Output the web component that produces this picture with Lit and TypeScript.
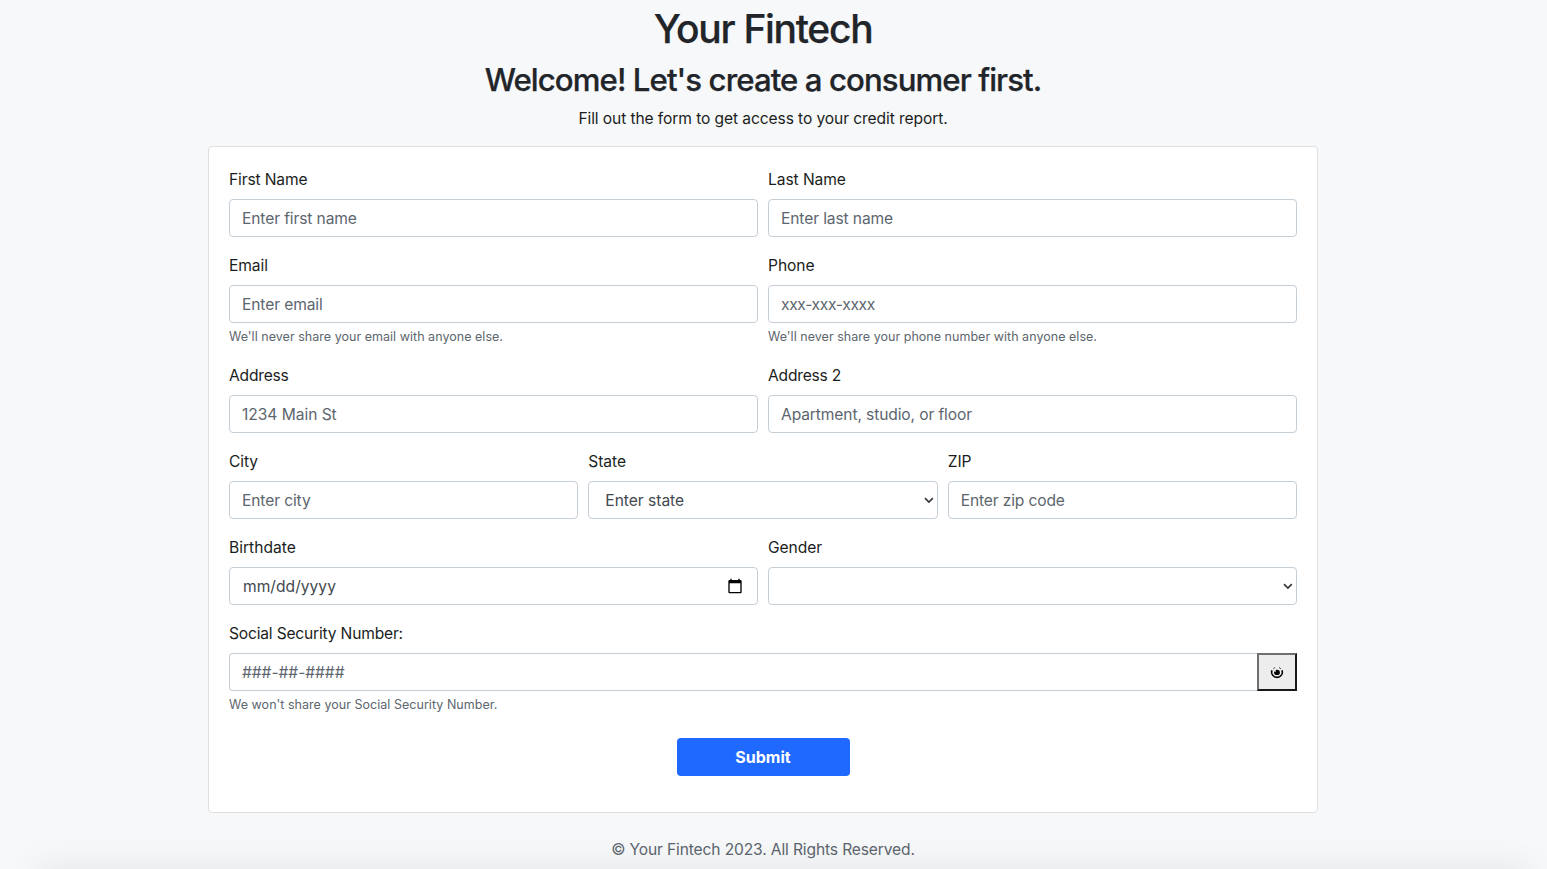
import { LitElement, html, css, svg, nothing } from "lit";

interface Field {
  id: string;
  label: string;
  kind?: "text" | "select" | "date";
  hint?: string;
  help?: string;
  labelTrack?: number;
  hintTrack?: number;
}

const ROWS: Field[][] = [
  [
    { id: "first", label: "First Name", hint: "Enter first name", labelTrack: -0.15 },
    { id: "last", label: "Last Name", hint: "Enter last name" },
  ],
  [
    { id: "email", label: "Email", hint: "Enter email", help: "We'll never share your email with anyone else." },
    { id: "phone", label: "Phone", hint: "xxx-xxx-xxxx", hintTrack: -0.35, help: "We'll never share your phone number with anyone else." },
  ],
  [
    { id: "address", label: "Address", hint: "1234 Main St", labelTrack: -0.2, hintTrack: -0.05 },
    { id: "address2", label: "Address 2", hint: "Apartment, studio, or floor", labelTrack: -0.2 },
  ],
  [
    { id: "city", label: "City", hint: "Enter city" },
    { id: "state", label: "State", kind: "select", hint: "Enter state", hintTrack: -0.03 },
    { id: "zip", label: "ZIP", hint: "Enter zip code", hintTrack: -0.14 },
  ],
  [
    { id: "birthdate", label: "Birthdate", kind: "date", hint: "mm/dd/yyyy", hintTrack: 0.02, labelTrack: 0 },
    { id: "gender", label: "Gender", kind: "select", hint: "" },
  ],
];

const chevron = svg`<path d="M1 1.2 4.9 5 8.8 1.2" fill="none" stroke="#343a40" stroke-width="1.7"/>`;
const calendar = svg`<path d="M20 3h-1V1h-2v2H7V1H5v2H4c-1.1 0-2 .9-2 2v16c0 1.1.9 2 2 2h16c1.1 0 2-.9 2-2V5c0-1.1-.9-2-2-2zm0 18H4V8h16v13z"/>`;

class AppRoot extends LitElement {
  static styles = css`
    :host {
      display: block;
      position: relative;
      box-sizing: border-box;
      height: 869px;
      overflow: hidden;
      padding: 5px 229px 0 208px;
      background: #f7f8fa;
      color: #212529;
      font: 400 15.6px/24px Inter, "Liberation Sans", sans-serif;
      letter-spacing: -0.08px;
    }
    *, *::before, *::after { box-sizing: border-box; }
    h1, h2, p { margin: 0; text-align: center; }
    h1 { font-size: 39px; line-height: 48px; font-weight: 500; letter-spacing: -1.3px; margin-bottom: 8px; }
    h2 { font-size: 31.2px; line-height: 38px; font-weight: 500; letter-spacing: -0.93px; margin-bottom: 8px; }
    h1, h2 { -webkit-text-stroke: 0.25px #212529; }
    .lead { margin-bottom: 15px; letter-spacing: -0.1px; }
    .card {
      height: 667px;
      padding: 20px;
      border: 1px solid #dddfe1;
      border-radius: 4px;
      background: #fff;
    }
    .row { display: flex; gap: 10px; margin-bottom: 16px; }
    .field { flex: 1 1 0; min-width: 0; }
    label { display: block; padding-top: 1px; margin-bottom: 7px; letter-spacing: var(--track, -0.08px); }
    .lead, label { color: #1b1e21; }
    .box { display: grid; }
    .box > * { grid-area: 1 / 1; }
    .control {
      display: block;
      width: 100%;
      height: 38px;
      margin: 0;
      padding: 6px 12px;
      border: 1px solid #c6ced6;
      border-radius: 4px;
      outline: 0;
      background: #fff;
      color: #43494f;
      font: inherit;
      letter-spacing: var(--track, -0.12px);
      appearance: none;
    }
    .control::placeholder { color: #5d666e; opacity: 1; }
    .date { padding-left: 13px; }
    .date::placeholder { color: #43494f; }
    select.control { padding: 7px 12px 5px 16px; }
    .chevron, .calendar { align-self: center; justify-self: end; pointer-events: none; }
    .chevron { margin-right: 4px; }
    .calendar { margin: 0 15px 1px 0; }
    .help { display: block; height: 20px; margin-top: 4px; font-size: 12.5px; line-height: 20px; letter-spacing: 0.03px; color: #5d666e; }
    .group { display: flex; }
    .group .control { flex: 1; border-radius: 4px 0 0 4px; border-right: 0; }
    .reveal {
      display: flex;
      align-items: center;
      justify-content: center;
      width: 40px;
      height: 38px;
      padding: 2px 0 0;
      border: 2px solid;
      border-color: #6d6f71 #16191c #16191c #6d6f71;
      border-radius: 0;
      background: #ededed;
    }
    .submit {
      display: block;
      width: 173px;
      height: 38px;
      margin: 23px auto 0;
      padding: 0;
      border: 0;
      border-radius: 4px;
      background: #1f69ff;
      color: #fff;
      font: inherit;
      font-size: 16px;
      font-weight: 700;
      letter-spacing: 0;
    }
    .footer { margin-top: 25px; color: #5d666e; letter-spacing: -0.14px; }
    .shade {
      position: absolute;
      top: 869px;
      left: 40px;
      right: 20px;
      height: 60px;
      box-shadow: 0 0 36px rgba(0, 0, 0, 0.09);
      pointer-events: none;
    }
  `;

  private track(n?: number) {
    return n === undefined ? nothing : `--track:${n}px`;
  }

  private control(f: Field) {
    if (f.kind === "select") {
      return html`<div class="box">
        <select id=${f.id} class="control" style=${this.track(f.hintTrack)}><option>${f.hint}</option></select>
        <svg class="chevron" width="10" height="7" viewBox="0 0 10 7">${chevron}</svg>
      </div>`;
    }
    if (f.kind === "date") {
      return html`<div class="box">
        <input id=${f.id} class="control date" placeholder=${f.hint} style=${this.track(f.hintTrack)} />
        <svg class="calendar" width="16" height="16" viewBox="0 0 24 24">${calendar}</svg>
      </div>`;
    }
    return html`<input id=${f.id} class="control" placeholder=${f.hint} style=${this.track(f.hintTrack)} />`;
  }

  render() {
    return html`
      <h1>Your Fintech</h1>
      <h2>Welcome! Let's create a consumer first.</h2>
      <p class="lead">Fill out the form to get access to your credit report.</p>
      <form class="card" @submit=${(e: Event) => e.preventDefault()}>
        ${ROWS.map((row) => html`<div class="row">
          ${row.map((f) => html`<div class="field">
            <label for=${f.id} style=${this.track(f.labelTrack)}>${f.label}</label>
            ${this.control(f)}
            ${f.help ? html`<small class="help">${f.help}</small>` : nothing}
          </div>`)}
        </div>`)}
        <div>
          <label for="ssn" style=${this.track(-0.19)}>Social Security Number:</label>
          <div class="group">
            <input id="ssn" class="control" placeholder="###-##-####" style=${this.track(-0.07)} />
            <button class="reveal" type="button" aria-label="Show number">
              <svg width="14" height="14" viewBox="0 0 14 14">
                <path d="M4.800 1.600A5.500 5.500 0 0 0 3.400 2.800M9.200 1.600A5.500 5.500 0 0 1 10.800 2.800" fill="none" stroke="#222" stroke-width="1"/>
                <path d="M1.900 4.200A5.400 5.400 0 1 0 12.100 4.200" fill="none" stroke="#000" stroke-width="1.600"/>
                <ellipse cx="7" cy="6.400" rx="2.900" ry="2.600" fill="#000"/>
                <circle cx="5" cy="4.900" r=".9" fill="#ededed"/>
              </svg>
            </button>
          </div>
          <small class="help">We won't share your Social Security Number.</small>
        </div>
        <button class="submit" type="submit">Submit</button>
      </form>
      <p class="footer">© Your Fintech 2023. All Rights Reserved.</p>
      <div class="shade"></div>
    `;
  }
}
customElements.define("app-root", AppRoot);
